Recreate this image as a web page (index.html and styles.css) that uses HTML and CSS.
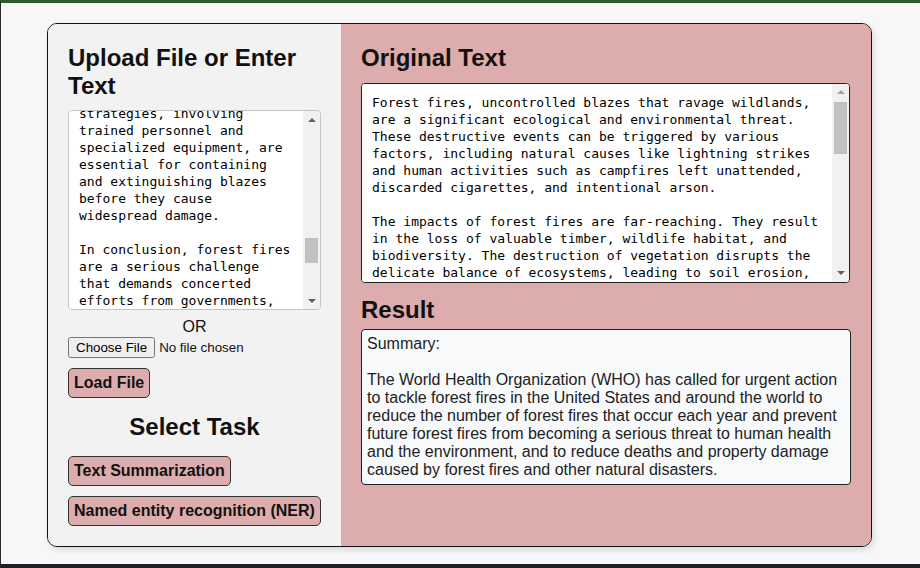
FILE: index.html
```html
<!DOCTYPE html>
<html lang="en">
<head>
<meta charset="utf-8">
<title>Text Tools</title>
<link rel="stylesheet" href="styles.css">
</head>
<body>
<div class="frame">
  <main class="page">
    <div class="card">
      <section class="panel-left">
        <h2 class="title">Upload File or Enter Text</h2>
        <div class="text-box input-box">
          <textarea class="text-area" id="inputText" spellcheck="false">Forest fires, uncontrolled blazes that ravage wildlands, are a significant ecological and environmental threat. These destructive events can be triggered by various factors, including natural causes like lightning strikes and human activities such as campfires left unattended, discarded cigarettes, and intentional arson.

The impacts of forest fires are far-reaching. They result in the loss of valuable timber, wildlife habitat, and biodiversity. The destruction of vegetation disrupts the delicate balance of ecosystems, leading to soil erosion, water pollution, and the release of large amounts of carbon dioxide into the atmosphere, contributing to climate change. Forest fires also pose serious risks to human health and safety, as smoke and ash degrade air quality and flames threaten homes, infrastructure, and lives.

Preventing and managing forest fires requires a combination of approaches. Public awareness campaigns can educate people about fire safety and responsible behavior in forested areas. Controlled burns and the removal of dry vegetation help reduce the buildup of fuel. Early detection systems, such as watchtowers, satellites, and drones, allow authorities to respond quickly to new outbreaks. Effective firefighting strategies, involving trained personnel and specialized equipment, are essential for containing and extinguishing blazes before they cause widespread damage.

In conclusion, forest fires are a serious challenge that demands concerted efforts from governments, communities, and individuals. By understanding their causes and impacts, investing in prevention and early detection, and supporting the brave firefighters who work on the front lines, we can reduce the devastation caused by these blazes. Protecting our forests is not only vital for the wildlife and ecosystems that depend on them, but also for the health, safety, and well-being of future generations.</textarea>
          <div class="scrollbar" aria-hidden="true">
            <span class="sb-btn"><span class="arrow-up"></span></span>
            <div class="sb-track"><div class="sb-thumb" style="margin-top:110px;height:25px"></div></div>
            <span class="sb-btn"><span class="arrow-down"></span></span>
          </div>
        </div>
        <div class="or">OR</div>
        <input class="file-input" type="file">
        <button class="btn btn-load" type="button">Load File</button>
        <h2 class="task-title">Select Task</h2>
        <div class="task-list">
          <button class="btn" type="button">Text Summarization</button>
          <button class="btn" type="button">Named entity recognition (NER)</button>
        </div>
      </section>
      <section class="panel-right">
        <h2 class="title">Original Text</h2>
        <div class="text-box original-box">
          <textarea class="text-area" readonly spellcheck="false">Forest fires, uncontrolled blazes that ravage wildlands, are a significant ecological and environmental threat. These destructive events can be triggered by various factors, including natural causes like lightning strikes and human activities such as campfires left unattended, discarded cigarettes, and intentional arson.

The impacts of forest fires are far-reaching. They result in the loss of valuable timber, wildlife habitat, and biodiversity. The destruction of vegetation disrupts the delicate balance of ecosystems, leading to soil erosion, water pollution, and the release of large amounts of carbon dioxide into the atmosphere, contributing to climate change. Forest fires also pose serious risks to human health and safety, as smoke and ash degrade air quality and flames threaten homes, infrastructure, and lives.

Preventing and managing forest fires requires a combination of approaches. Public awareness campaigns can educate people about fire safety and responsible behavior in forested areas. Controlled burns and the removal of dry vegetation help reduce the buildup of fuel. Early detection systems, such as watchtowers, satellites, and drones, allow authorities to respond quickly to new outbreaks. Effective firefighting strategies, involving trained personnel and specialized equipment, are essential for containing and extinguishing blazes before they cause widespread damage.

In conclusion, forest fires are a serious challenge that demands concerted efforts from governments, communities, and individuals. By understanding their causes and impacts, investing in prevention and early detection, and supporting the brave firefighters who work on the front lines, we can reduce the devastation caused by these blazes. Protecting our forests is not only vital for the wildlife and ecosystems that depend on them, but also for the health, safety, and well-being of future generations.</textarea>
          <div class="scrollbar" aria-hidden="true">
            <span class="sb-btn"><span class="arrow-up arrow-disabled"></span></span>
            <div class="sb-track"><div class="sb-thumb" style="margin-top:1px;height:52px"></div></div>
            <span class="sb-btn"><span class="arrow-down"></span></span>
          </div>
        </div>
        <h2 class="result-title">Result</h2>
        <div class="result">Summary:

The World Health Organization (WHO) has called for urgent action to tackle forest fires in the United States and around the world to reduce the number of forest fires that occur each year and prevent future forest fires from becoming a serious threat to human health and the environment, and to reduce deaths and property damage caused by forest fires and other natural disasters.</div>
      </section>
    </div>
  </main>
  <div class="taskbar"></div>
</div>
<script src="script.js"></script>
</body>
</html>
```

FILE: styles.css
```css
* { box-sizing: border-box; }

html, body {
  margin: 0;
  padding: 0;
  height: 100%;
}

body {
  font-family: "Liberation Sans", Arial, sans-serif;
  color: #000;
  background: #f7f7f7;
  overflow: hidden;
}

.frame {
  height: 568px;
  display: flex;
  flex-direction: column;
  border-top: 3px solid #2d5c30;
  border-left: 1px solid #2a2a2a;
  background: #f7f7f7;
}

.page {
  flex: 1;
  padding: 20px 0 0 46px;
}

.taskbar {
  height: 4px;
  background: #1e1f22;
}

.card {
  width: 825px;
  display: flex;
  border: 1px solid #111;
  border-radius: 10px;
  overflow: hidden;
  box-shadow: 2px 3px 6px rgba(0, 0, 0, 0.12);
}

.panel-left {
  width: 293px;
  background: #f2f2f2;
  padding: 20px;
  display: flex;
  flex-direction: column;
  align-items: flex-start;
}

.panel-right {
  flex: 1;
  background: #ddacac;
  padding: 20px;
  display: flex;
  flex-direction: column;
}

.title,
.task-title,
.result-title {
  font-size: 24px;
  font-weight: bold;
  line-height: 27.6px;
  margin: 0;
  color: #111;
}

.panel-left .title { margin-bottom: 11px; }
.panel-right .title { margin-bottom: 11px; }

/* text boxes with classic scrollbar */
.text-box {
  display: flex;
  height: 200px;
  background: #fff;
  border-radius: 4px;
  overflow: hidden;
}

.input-box {
  width: 253px;
  border: 1px solid #c4c4c4;
}

.original-box {
  width: 489px;
  border: 1px solid #222;
}

.text-area {
  flex: 1;
  min-width: 0;
  height: 100%;
  margin: 0;
  border: none;
  padding: 10px;
  font-family: "DejaVu Sans Mono", "Liberation Mono", monospace;
  font-size: 13px;
  line-height: 17px;
  color: #000;
  background: #fff;
  resize: none;
  outline: none;
  overflow: hidden;
}

.scrollbar {
  width: 17px;
  flex: none;
  display: flex;
  flex-direction: column;
  background: #f1f1f1;
}

.sb-btn {
  height: 17px;
  flex: none;
  display: flex;
  align-items: center;
  justify-content: center;
}

.sb-track {
  flex: 1;
  padding: 0 2px;
}

.sb-thumb {
  background: #c1c1c1;
}

.arrow-up,
.arrow-down {
  width: 0;
  height: 0;
  border-left: 4px solid transparent;
  border-right: 4px solid transparent;
}

.arrow-up { border-bottom: 4px solid #606060; }
.arrow-down { border-top: 4px solid #606060; }
.arrow-up.arrow-disabled { border-bottom-color: #a3a3a3; }

.or {
  align-self: stretch;
  text-align: center;
  font-size: 16px;
  line-height: 18.4px;
  margin-top: 8px;
  color: #111;
}

.file-input {
  font-family: "Liberation Sans", Arial, sans-serif;
  font-size: 13.33px;
  color: #111;
}

.btn {
  font-family: "Liberation Sans", Arial, sans-serif;
  font-size: 16px;
  font-weight: bold;
  line-height: 18.4px;
  color: #111;
  background: #ddacac;
  border: 1px solid #333;
  border-radius: 5px;
  padding: 5px 5px;
  cursor: pointer;
}

.btn-load { margin-top: 10px; }

.task-title {
  align-self: stretch;
  text-align: center;
  margin-top: 15px;
  margin-bottom: 15px;
}

.task-list {
  display: flex;
  flex-direction: column;
  align-items: flex-start;
  gap: 10px;
}

.result-title {
  margin-top: 13px;
  margin-bottom: 6px;
}

.result {
  white-space: pre-wrap;
  font-size: 16px;
  line-height: 18px;
  color: #222;
  background: #f8f9fb;
  border: 1px solid #222;
  border-radius: 4px;
  padding: 5px;
}
```

FILE: script.js
```js
document.getElementById('inputText').scrollTop = 917;
```
